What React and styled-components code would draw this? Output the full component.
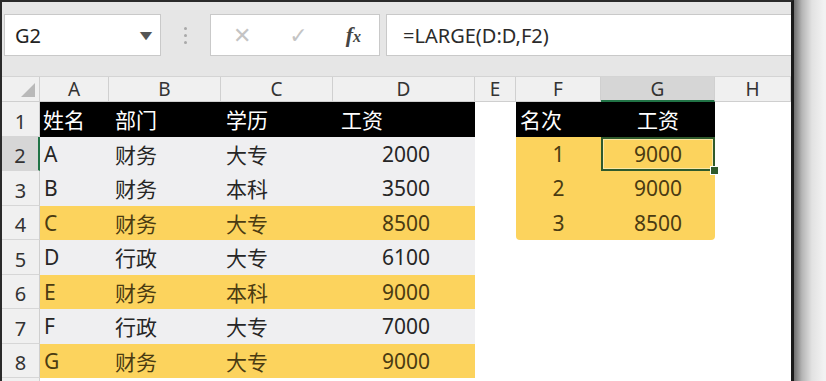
import React from "react";
import styled, { createGlobalStyle } from "styled-components";

const Global = createGlobalStyle`
  html, body { margin: 0; padding: 0; background: #f2f2f2; }
  body { font-family: "Noto Sans", "Noto Sans CJK SC", sans-serif; }
`;

const YELLOW = "#fcd35d";
const GRAY = "#efeff1";

const cols = ["A", "B", "C", "D", "E", "F", "G", "H"];

const rows = [
  { name: "A", dept: "财务", edu: "大专", pay: "2000", hi: false },
  { name: "B", dept: "财务", edu: "本科", pay: "3500", hi: false },
  { name: "C", dept: "财务", edu: "大专", pay: "8500", hi: true },
  { name: "D", dept: "行政", edu: "大专", pay: "6100", hi: false },
  { name: "E", dept: "财务", edu: "本科", pay: "9000", hi: true },
  { name: "F", dept: "行政", edu: "大专", pay: "7000", hi: false },
  { name: "G", dept: "财务", edu: "大专", pay: "9000", hi: true },
];

const rank = [
  { n: "1", v: "9000" },
  { n: "2", v: "9000" },
  { n: "3", v: "8500" },
];

function App() {
  return (
    <>
      <Global />
      <Frame>
        <Window>
          <Toolbar>
            <NameBox>
              <span>G2</span>
              <Caret>▼</Caret>
            </NameBox>
            <Dots>
              <i />
              <i />
              <i />
            </Dots>
            <FnBox>
              <FnIcon $c="#c4c4c4">✕</FnIcon>
              <FnIcon $c="#c4c4c4">✓</FnIcon>
              <Fx>
                f<small>x</small>
              </Fx>
            </FnBox>
            <Formula>=LARGE(D:D,F2)</Formula>
          </Toolbar>

          <Sheet>
            <Corner>
              <svg width="14" height="14" viewBox="0 0 14 14">
                <path d="M14 0 L14 14 L0 14 Z" fill="#b9b9b9" />
              </svg>
            </Corner>
            {cols.map((c) => (
              <ColHead key={c} $active={c === "G"}>
                {c}
              </ColHead>
            ))}

            {/* row 1 */}
            <RowHead>1</RowHead>
            <Cell $bg="#000" $color="#fff" $pl={3}>姓名</Cell>
            <Cell $bg="#000" $color="#fff" $pl={6}>部门</Cell>
            <Cell $bg="#000" $color="#fff" $pl={5}>学历</Cell>
            <Cell $bg="#000" $color="#fff" $pl={8}>工资</Cell>
            <Cell />
            <Cell $bg="#000" $color="#fff" $pl={4}>名次</Cell>
            <Cell $bg="#000" $color="#fff" $align="center">工资</Cell>
            <Cell />

            {rows.map((r, i) => {
              const bg = r.hi ? YELLOW : GRAY;
              const color = r.hi ? "#4a3b12" : "#262626";
              const rk = rank[i];
              return (
                <React.Fragment key={r.name}>
                  <RowHead $active={i === 0}>{i + 2}</RowHead>
                  <Cell $bg={bg} $color={color} $pl={4}>{r.name}</Cell>
                  <Cell $bg={bg} $color={color} $pl={6}>{r.dept}</Cell>
                  <Cell $bg={bg} $color={color} $pl={5}>{r.edu}</Cell>
                  <Cell $bg={bg} $color={color} $align="right" $pr={45}>{r.pay}</Cell>
                  <Cell />
                  {rk ? (
                    <>
                      <Cell $bg={YELLOW} $color="#4a3b12" $align="center" $round={i === 2 ? "0 0 0 4px" : ""}>
                        {rk.n}
                      </Cell>
                      <Cell $bg={YELLOW} $color="#4a3b12" $align="center" $selected={i === 0} $round={i === 2 ? "0 0 4px 0" : ""}>
                        {rk.v}
                        {i === 0 && <Handle />}
                      </Cell>
                    </>
                  ) : (
                    <>
                      <Cell />
                      <Cell />
                    </>
                  )}
                  <Cell />
                </React.Fragment>
              );
            })}

            <RowHead />
            {cols.map((c) => (
              <Cell key={"x" + c} />
            ))}
          </Sheet>
        </Window>
        <Shadow />
      </Frame>
    </>
  );
}

const Frame = styled.div`
  display: flex;
  width: 826px;
  height: 381px;
  overflow: hidden;
`;

const Window = styled.div`
  width: 789px;
  flex: none;
  border-top: 2px solid #2a2a2a;
  border-left: 2px solid #2a2a2a;
  border-right: 3px solid #1a1a1a;
  background: #fff;
  display: flex;
  flex-direction: column;
  overflow: hidden;
`;

const Shadow = styled.div`
  flex: 1;
  background: linear-gradient(to right, #6e6e6e 0px, #b5b5b5 8px, #e2e2e2 18px, #f2f2f2 30px);
`;

const Toolbar = styled.div`
  flex: none;
  height: 75px;
  box-sizing: border-box;
  background: #e6e6e6;
  display: flex;
  align-items: flex-start;
  padding: 12px 0 0 2px;
  border-bottom: 1px solid #d4d4d4;
`;

const Box = styled.div`
  height: 42px;
  box-sizing: border-box;
  background: #fff;
  border: 1px solid #c9c9c9;
  display: flex;
  align-items: center;
`;

const NameBox = styled(Box)`
  width: 157px;
  padding: 0 9px 0 10px;
  justify-content: space-between;
  font-size: 20px;
  color: #222;
`;

const Caret = styled.span`
  font-size: 10px;
  color: #555;
  transform: scaleX(1.3);
`;

const Dots = styled.div`
  width: 49px;
  height: 42px;
  display: flex;
  flex-direction: column;
  align-items: center;
  justify-content: center;
  gap: 4px;
  i {
    display: block;
    width: 3px;
    height: 3px;
    border-radius: 50%;
    background: #a9a9a9;
  }
`;

const FnBox = styled(Box)`
  width: 170px;
  padding: 0 18px 0 22px;
  justify-content: space-between;
`;

const FnIcon = styled.span`
  font-size: 22px;
  color: ${(p) => p.$c};
  font-family: "DejaVu Sans", sans-serif;
`;

const Fx = styled.span`
  font-family: "Liberation Serif", serif;
  font-style: italic;
  font-weight: bold;
  font-size: 22px;
  color: #444;
  small {
    font-size: 16px;
  }
`;

const Formula = styled(Box)`
  flex: 1;
  margin-left: 6px;
  border-right: none;
  padding-left: 16px;
  font-size: 20px;
  color: #2b2b2b;
`;

const Sheet = styled.div`
  flex: none;
  display: grid;
  grid-template-columns: 38px 69px 112px 112px 142px 41px 85px 114px 1fr;
  grid-template-rows: 25px repeat(8, 34.5px) 20px;
  font-size: 21px;
`;

const Corner = styled.div`
  background: #f0f0f0;
  border-right: 1px solid #cfcfcf;
  border-bottom: 1px solid #cfcfcf;
  display: flex;
  align-items: flex-end;
  justify-content: flex-end;
  padding: 0 4px 4px 0;
`;

const ColHead = styled.div`
  background: ${(p) => (p.$active ? "#d6d6d6" : "#f0f0f0")};
  border-right: 1px solid #d0d0d0;
  border-bottom: ${(p) => (p.$active ? "2px solid #217346" : "1px solid #cfcfcf")};
  display: flex;
  align-items: center;
  justify-content: center;
  font-size: 19px;
  color: #333;
`;

const RowHead = styled.div`
  background: ${(p) => (p.$active ? "#d6d6d6" : "#f0f0f0")};
  border-right: ${(p) => (p.$active ? "2px solid #217346" : "1px solid #cfcfcf")};
  border-bottom: 1px solid #d6d6d6;
  display: flex;
  align-items: flex-end;
  justify-content: center;
  padding-bottom: 1px;
  font-size: 20px;
  color: #333;
`;

const Cell = styled.div`
  position: relative;
  background: ${(p) => p.$bg || "#fff"};
  color: ${(p) => p.$color || "#222"};
  display: flex;
  align-items: center;
  justify-content: ${(p) =>
    p.$align === "right" ? "flex-end" : p.$align === "center" ? "center" : "flex-start"};
  padding-left: ${(p) => p.$pl || 0}px;
  padding-right: ${(p) => p.$pr || 0}px;
  border-radius: ${(p) => p.$round || 0};
  font-family: "Noto Sans", "Noto Sans CJK SC", sans-serif;
  ${(p) =>
    p.$selected &&
    `
    z-index: 2;
    outline: 2px solid #2f5a2c;
    outline-offset: -2px;
    box-shadow: inset 0 0 0 3px #fbe8a6;
  `}
`;

const Handle = styled.span`
  position: absolute;
  right: -4px;
  bottom: -4px;
  width: 7px;
  height: 7px;
  background: #2f5a2c;
  border: 1px solid #fff;
`;

export default App;
